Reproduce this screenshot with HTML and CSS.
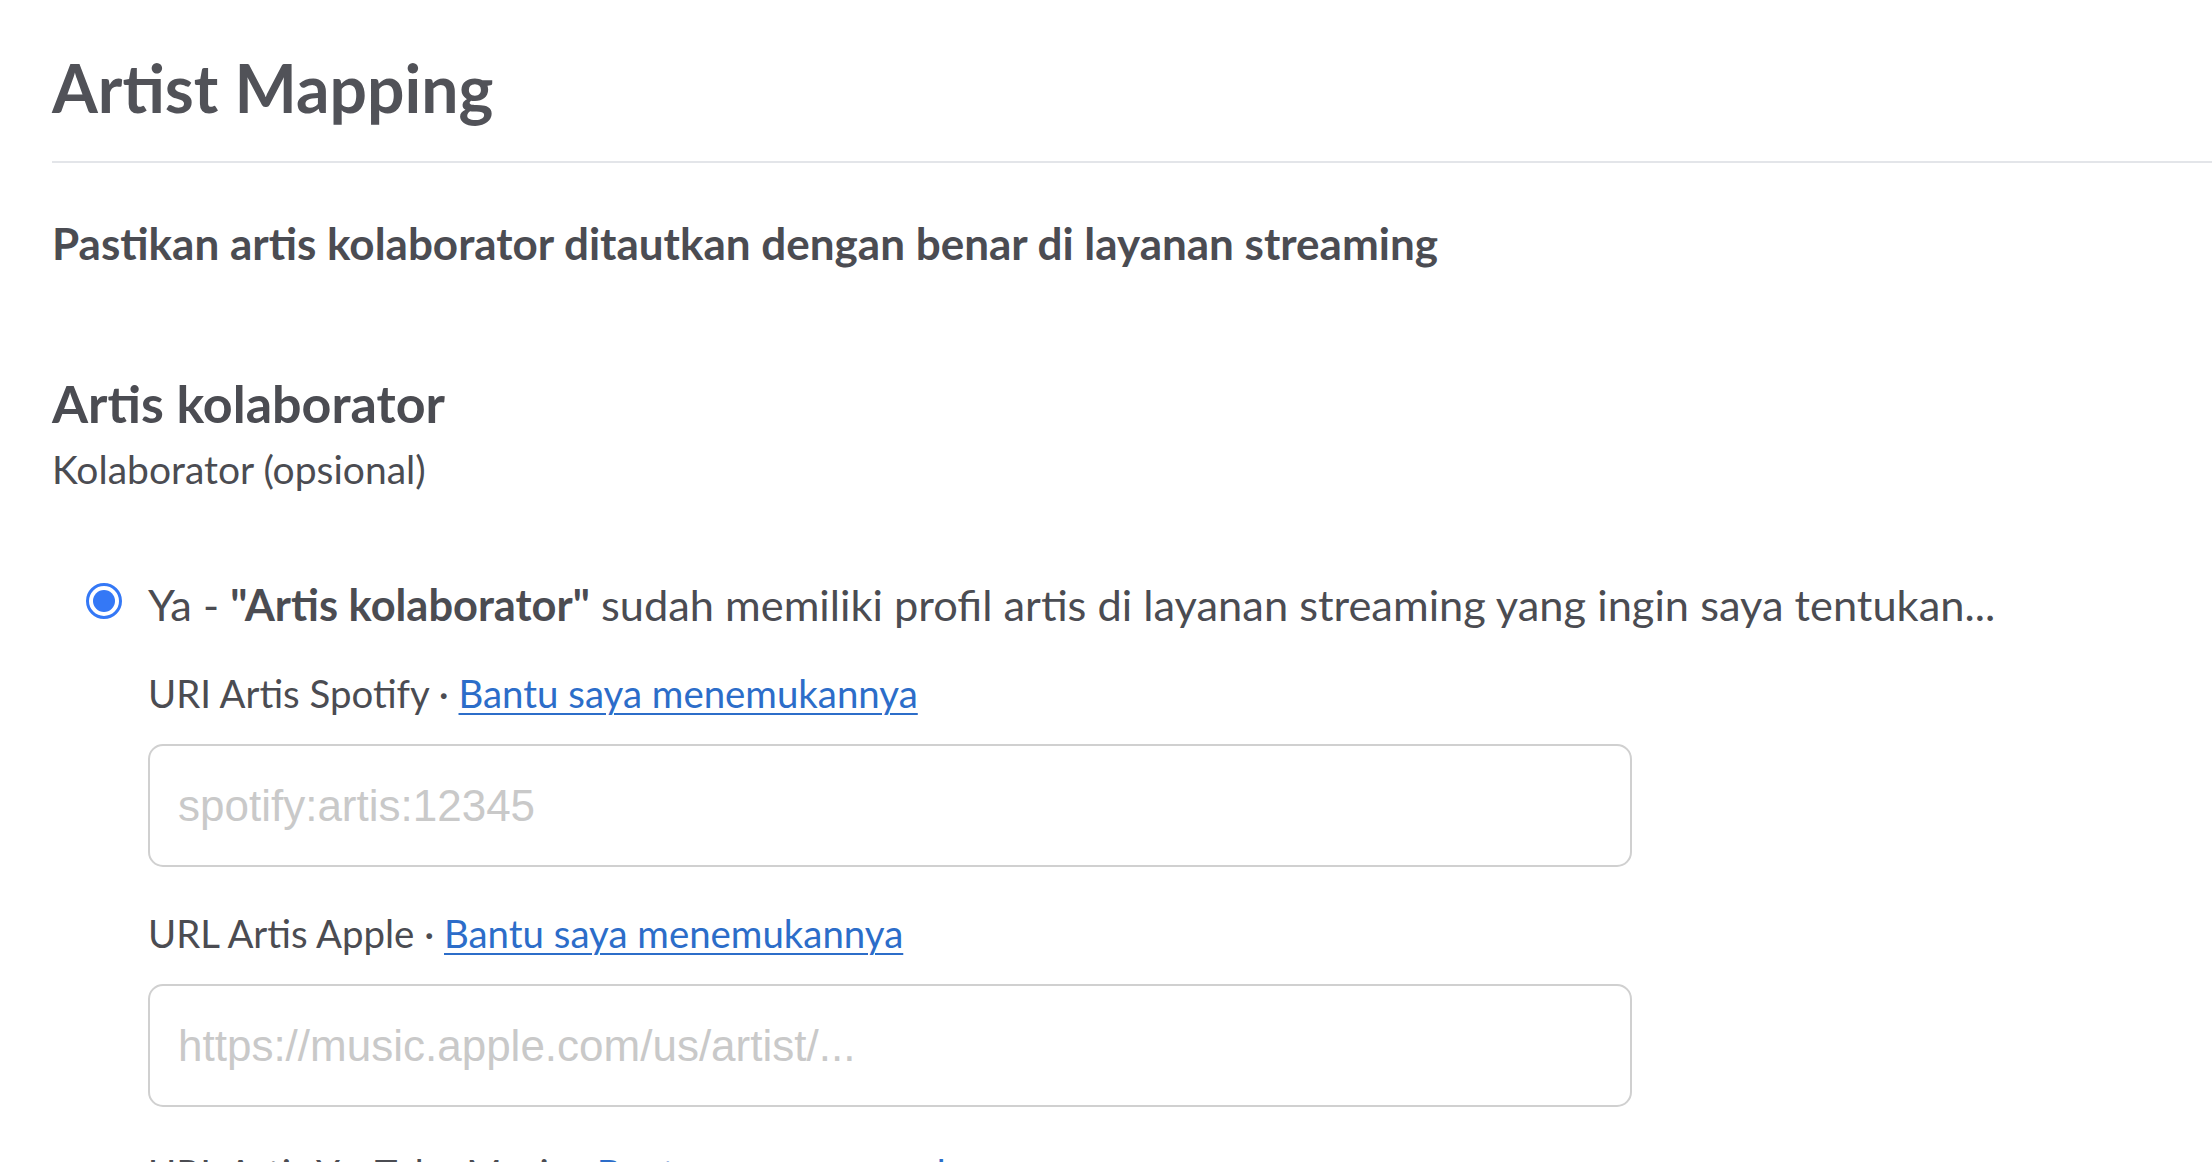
FILE: index.html
```html
<!DOCTYPE html>
<html lang="id">
<head>
    <meta charset="UTF-8">
    <meta name="viewport" content="width=device-width, initial-scale=1.0">
    <title>Artist Mapping</title>
    <link rel="stylesheet" href="styles.css">
</head>
<body>
    <div class="page">
        <div class="page-header">
            <h1>Artist Mapping</h1>
        </div>
        <p class="intro">Pastikan artis kolaborator ditautkan dengan benar di layanan streaming</p>

        <div class="section">
            <h2>Artis kolaborator</h2>
            <div class="section-sub">Kolaborator (opsional)</div>

            <label class="radio-row">
                <span class="radio checked"></span>
                <span class="radio-text">Ya - <b>"Artis kolaborator"</b> sudah memiliki profil artis di layanan streaming yang ingin saya tentukan...</span>
            </label>

            <div class="fields">
                <div class="field">
                    <div class="field-label">URI Artis Spotify · <a href="#">Bantu saya menemukannya</a></div>
                    <input class="text-input" type="text" placeholder="spotify:artis:12345">
                </div>
                <div class="field">
                    <div class="field-label">URL Artis Apple · <a href="#">Bantu saya menemukannya</a></div>
                    <input class="text-input" type="text" placeholder="https://music.apple.com/us/artist/...">
                </div>
                <div class="field">
                    <div class="field-label">URL Artis YouTube Music · <a href="#">Bantu saya menemukannya</a></div>
                    <input class="text-input" type="text" placeholder="https://music.youtube.com/channel/...">
                </div>
            </div>
        </div>
    </div>
</body>
</html>
```

FILE: styles.css
```css
html, body {
    margin: 0;
    padding: 0;
    background: #fff;
    color: #4b4c52;
    font-family: Lato, "Open Sans", sans-serif;
}
.page {
    padding-left: 52px;
    overflow: hidden;
    height: 1162px;
}
.page-header {
    padding-top: 48px;
    padding-bottom: 34px;
    border-bottom: 2px solid #e3e5e9;
}
h1 {
    margin: 0;
    font-size: 66px;
    line-height: 1.2;
    font-weight: 700;
    color: #515258;
}
.intro {
    margin: 54px 0 0 0;
    font-size: 44px;
    line-height: 1.2;
    font-weight: 700;
}
.section {
    margin-top: 102px;
}
h2 {
    margin: 0;
    font-size: 52px;
    line-height: 1.2;
    font-weight: 700;
}
.section-sub {
    margin-top: 12px;
    font-size: 39px;
    line-height: 1.2;
}
.radio-row {
    display: flex;
    align-items: center;
    margin-top: 85px;
    font-size: 43.4px;
    line-height: 1.2;
    cursor: pointer;
}
.radio {
    box-sizing: border-box;
    width: 36px;
    height: 36px;
    margin-left: 34px;
    margin-right: 26px;
    margin-top: -6px;
    border: 3px solid #3478f6;
    border-radius: 50%;
    display: flex;
    align-items: center;
    justify-content: center;
    flex-shrink: 0;
}
.radio.checked::after {
    content: "";
    width: 22px;
    height: 22px;
    border-radius: 50%;
    background: #3478f6;
}
.radio-text b {
    font-weight: 700;
}
.fields {
    padding-left: 96px;
}
.field {
    margin-top: 40px;
}
.field + .field {
    margin-top: 43px;
}
.field-label {
    font-size: 38.4px;
    line-height: 1.2;
}
.field-label a {
    color: #2c6dc9;
    text-decoration: underline;
    text-decoration-thickness: 2px;
    text-underline-offset: 5px;
}
.text-input {
    display: block;
    box-sizing: border-box;
    width: 1484px;
    height: 123px;
    margin-top: 28px;
    padding: 0 28px;
    border: 2px solid #d0d0d0;
    border-radius: 15px;
    font-family: "Liberation Sans", Arial, sans-serif;
    font-size: 44px;
    color: #333;
    outline: none;
}
.text-input::placeholder {
    color: #c9c9c9;
}
```
